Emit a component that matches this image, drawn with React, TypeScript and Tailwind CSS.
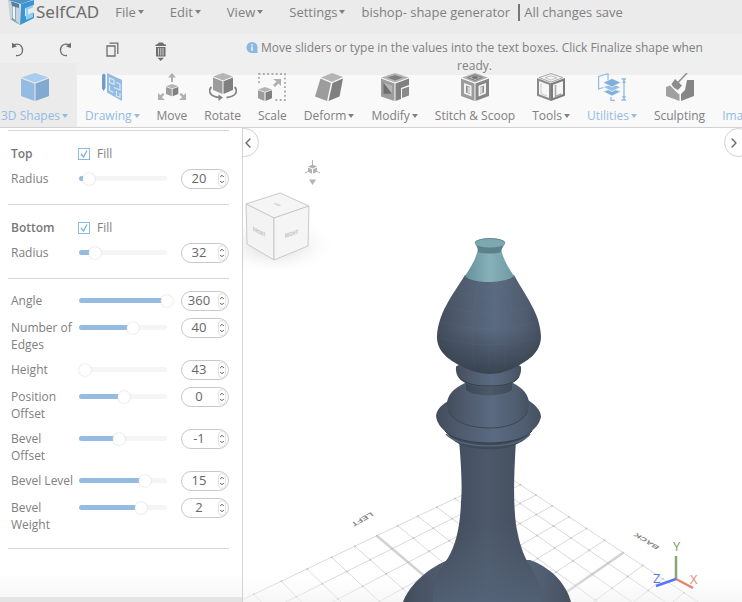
import { useState } from "react";
import type { ReactNode } from "react";
import { ChevronDown, ChevronLeft, ChevronRight, ChevronUp } from "lucide-react";

const Caret = () => (
	<svg viewBox="0 0 6 4" className="w-[6px] h-1 shrink-0" fill="currentColor" aria-hidden="true">
		<path d="M0 0h6L3 4z" />
	</svg>
);

/* ----- Icons ----- */
const Icon = ({ children }: { children: ReactNode }) => (
	<svg viewBox="0 0 28 28" className="w-7 h-7" aria-hidden="true">
		{children}
	</svg>
);

const SmallCube = ({ at }: { at: string }) => (
	<g transform={at}>
		<path d="M7 0l7 2.500L7 5 0 2.500z" fill="#b5b5b5" />
		<path d="M0 3.300l6.500 2.300V14L0 11.300z" fill="#9c9c9c" />
		<path d="M14 3.300L7.500 5.600V14L14 11.300z" fill="#808080" />
	</g>
);

const ShapesIcon = () => (
	<Icon>
		<path d="M14 0l13.500 4.500L14 9.500.5 4.500z" fill="#a9cdee" />
		<path d="M0 5.500l13.500 5V28L0 23z" fill="#94bce2" />
		<path d="M28 5.500l-13.500 5V28L28 23z" fill="#82a9cf" />
	</Icon>
);

const DrawingIcon = () => (
	<Icon>
		<path d="M4 2l2-1.500 1.500 1.500v13L5.700 18 4 15.500z" fill="#6f9dc8" />
		<path d="M9 0l15 7v21L9 19.500z" fill="#94bce2" />
		<path d="M11.500 5l4.500 2v4.500l-4.500-2zM11.500 12.500v5l4 2M18.500 9.500l3.500 1.500v6l-6-2.500M18.500 18v5l3.500 1.500V20" fill="none" stroke="#dcebf8" strokeWidth="1.100" />
	</Icon>
);

const MoveIcon = () => (
	<Icon>
		<path d="M14 0l4 4.500h-3V9h-2V4.500h-3zM0 27V20l2.300 2.300L5 20l1.500 1.500-2.700 2.700L7 27zM28 27V20l-2.300 2.300L23 20l-1.500 1.500 2.700 2.700L21 27z" fill="#b0b0b0" />
		<SmallCube at="translate(8 11) scale(.88)" />
	</Icon>
);

const RotateIcon = () => (
	<Icon>
		<path d="M14 0l10 3.500L14 7.500 4 3.500z" fill="#b5b5b5" />
		<path d="M4 4.500l9.500 3.700V21L4 17z" fill="#9c9c9c" />
		<path d="M24 4.500l-9.500 3.700V21l9.500-4z" fill="#808080" />
		<path d="M2.500 14C-1.500 18 1 24 11 24.500M25.500 14c4 4 1.500 9.500-8 10.500" fill="none" stroke="#858585" strokeWidth="1.800" />
		<path d="M9.500 21.500l4.500 3-4.500 3.500z" fill="#858585" />
	</Icon>
);

const ScaleIcon = () => (
	<Icon>
		<path d="M1 10V1h26v26H16" fill="none" stroke="#a8a8a8" strokeWidth="1.800" strokeDasharray="1.800 2.500" />
		<path d="M15 6h8v7l-2.500-2.500L17 14l-2-2 3.500-3.500z" fill="#b0b0b0" />
		<SmallCube at="translate(0 14)" />
	</Icon>
);

const DeformIcon = () => (
	<Icon>
		<path d="M6 4.500L17 0l11 4-11 5z" fill="#b5b5b5" />
		<path d="M5.500 5.500L16 10l-4 18L0 23.500z" fill="#9c9c9c" />
		<path d="M17.500 10L28 5.500l-3.500 18L13.500 28z" fill="#808080" />
	</Icon>
);

const ModifyIcon = () => (
	<Icon>
		<path d="M14 0l14 4.500L14 9.500 0 4.500z" fill="#b5b5b5" />
		<path d="M14 2l8 2.500L14 7.500l-8-3z" fill="#808080" />
		<path d="M0 5.500l13.500 5V28L0 23.500z" fill="#9c9c9c" />
		<path d="M2.500 9.500L11 20.500 2.500 21z" fill="#6f6f6f" />
		<path d="M2.500 9.500l8.500 3v8z" fill="#b5b5b5" />
		<path d="M14.500 10.500l13.500-5V12l-8 3v11l-5.500 2z" fill="#808080" />
		<path d="M21 16l7-2.500v9L21 25z" fill="#8b8b8b" />
	</Icon>
);

const StitchIcon = () => (
	<Icon>
		<path d="M14 0l13 4.500L14 9.500 1 4.500z" fill="#b0b0b0" />
		<path d="M14 1.800l7.500 2.700L14 7.500 6.500 4.500z" fill="none" stroke="#808080" strokeWidth="1" />
		<ellipse cx="14" cy="4.500" rx="3" ry="1.200" fill="#6f6f6f" />
		<path d="M0 5.500l13.500 5V28L0 23z" fill="#9c9c9c" />
		<path d="M28 5.500l-13.500 5V28L28 23z" fill="#868686" />
		<path d="M3 10l7.500 2.800v10.700L3 20.500zM25 10l-7.500 2.800v10.700l7.500-3z" fill="#f2f2f2" />
		<path d="M5 12.500l4 1.500v7l-4-1.500zM23 12.500L19 14v7l4-1.500z" fill="#8c8c8c" />
		<path d="M6.500 13.500L9 14.500v6l-2.500-1zM21.500 13.500L19 14.500v6l2.500-1z" fill="#d5d5d5" />
	</Icon>
);

const ToolsIcon = () => (
	<Icon>
		<path d="M14 .6l12 4-12 4.500-12-4.500z" fill="#f4f4f4" stroke="#a8a8a8" strokeWidth="1" />
		<path d="M14 2.800l6 2-6 2.200-6-2.200z" fill="none" stroke="#b8b8b8" strokeWidth=".8" />
		<path d="M1 6.500L13 11v15.500L1 22z" fill="#f6f6f6" stroke="#8b8b8b" strokeWidth="2" />
		<path d="M4 10.500v10l6 2.500" fill="none" stroke="#c9c9c9" strokeWidth="1" />
		<path d="M27 6.500L15 11v15.500L27 22z" fill="#f6f6f6" stroke="#7b7b7b" strokeWidth="2" />
		<path d="M18.500 12v11.500l6-2.500" fill="none" stroke="#a5a5a5" strokeWidth="1.500" />
	</Icon>
);

const UtilitiesIcon = () => (
	<Icon>
		<path d="M.6 3.500L10 .7V13L.6 16z" fill="none" stroke="#8fbbe3" strokeWidth="1.200" />
		<path d="M5 18.500l9-3 9 3-9 4.500z" fill="#7fb0dd" stroke="#f9f9f9" strokeWidth=".7" />
		<path d="M5 14l9-3 9 3-9 4.500z" fill="#94c0e8" stroke="#f9f9f9" strokeWidth=".7" />
		<path d="M5 9.500l9-4 9 4-9 4.500z" fill="#7fb0dd" stroke="#f9f9f9" strokeWidth=".7" />
		<path d="M26 6v21M23.500 6H28M23.500 27H28M13 24v3.500h4" fill="none" stroke="#8fbbe3" strokeWidth="1.300" />
		<path d="M24 10l2-3.500 2 3.500zM24 23l2 3.500 2-3.500z" fill="#8fbbe3" />
	</Icon>
);

const SculptingIcon = () => (
	<Icon>
		<path d="M0 14l4-1.500 8 8 1.500 1V28L0 23z" fill="#a0a0a0" />
		<path d="M15 21l4-4 2-10h7v16l-13 5z" fill="#868686" />
		<path d="M21 0L12 9.500" stroke="#8c8c8c" strokeWidth="1.500" />
		<path d="M9 6l7 6.500-4 4.500c-3-1-5.500-3-6.500-6z" fill="#8c8c8c" />
	</Icon>
);

const ImageIcon = () => (
	<Icon>
		<path d="M0 0h28v27H0z" fill="#a9cdee" />
		<path d="M0 0h2v27H0z" fill="#82aed8" />
	</Icon>
);

const Logo = () => (
	<svg viewBox="0 0 28 27" className="w-7 h-[27px] shrink-0" aria-hidden="true">
		<path d="M0 1l12 4v21L2 20z" fill="#c5d3dc" />
		<path d="M0 1l12-2 15 1-14 5z" fill="#4e93c4" />
		<path d="M3 2.500l8 2.500v4L7.500 8v14L4 20V7z" fill="#5c7f99" />
		<path d="M4.500 7L7 8v13l-2.500-2z" fill="#eef3f6" />
		<path d="M13 5l13-4v5l-9 3.500v8l9-3.500v5L12 26z" fill="#3d94d2" />
		<path d="M18 9l7-3v2.500l-5 2v5l5-2.500V18l-7 3z" fill="#8fd0f2" />
		<path d="M2 20l5 1 5 5z" fill="#7fa4ba" />
	</svg>
);

/* ----- Data ----- */
const menus = ["File", "Edit", "View", "Settings"];

const tools = [
	{ name: "3D Shapes", icon: <ShapesIcon />, menu: true, blue: true, active: true },
	{ name: "Drawing", icon: <DrawingIcon />, menu: true, blue: true },
	{ name: "Move", icon: <MoveIcon /> },
	{ name: "Rotate", icon: <RotateIcon /> },
	{ name: "Scale", icon: <ScaleIcon /> },
	{ name: "Deform", icon: <DeformIcon />, menu: true },
	{ name: "Modify", icon: <ModifyIcon />, menu: true },
	{ name: "Stitch & Scoop", icon: <StitchIcon /> },
	{ name: "Tools", icon: <ToolsIcon />, menu: true },
	{ name: "Utilities", icon: <UtilitiesIcon />, menu: true, blue: true },
	{ name: "Sculpting", icon: <SculptingIcon /> },
	{ name: "Image to 3D", icon: <ImageIcon />, blue: true },
];

const shape = [
	{ id: "angle", label: "Angle", value: 360, percent: 100 },
	{ id: "edges", label: "Number of Edges", value: 40, percent: 59 },
	{ id: "height", label: "Height", value: 43, percent: 0 },
	{ id: "position-offset", label: "Position Offset", value: 0, percent: 48 },
	{ id: "bevel-offset", label: "Bevel Offset", value: -1, percent: 42 },
	{ id: "bevel-level", label: "Bevel Level", value: 15, percent: 73 },
	{ id: "bevel-weight", label: "Bevel Weight", value: 2, percent: 68 },
];

/* ----- Side panel ----- */
interface SliderRowProps {
	id: string;
	label: string;
	value: number;
	percent: number;
}

const SliderRow = ({ id, label, value, percent }: SliderRowProps) => {
	const [position, setPosition] = useState(percent);
	const [text, setText] = useState(String(value));
	const step = (by: number) => setText(String(Number(text) + by));

	return (
		<div className="grid grid-cols-[68px_1fr_48px] items-start">
			<label htmlFor={id} className="pt-px pr-1 leading-[17px]">
				{label}
			</label>
			<div className="relative h-5 mr-2">
				<div className="absolute left-0 right-[6px] top-[7px] h-[5px] rounded-full bg-[#f5f5f5] overflow-hidden">
					<div className="h-full bg-[#95bce0]" style={{ width: `${position}%` }} />
				</div>
				<input
					type="range"
					aria-label={`${label} slider`}
					value={position}
					onChange={(e) => setPosition(Number(e.target.value))}
					className="absolute left-0 top-0 w-full h-5 appearance-none bg-transparent [&::-webkit-slider-thumb]:appearance-none [&::-webkit-slider-thumb]:size-3 [&::-webkit-slider-thumb]:rounded-full [&::-webkit-slider-thumb]:bg-white [&::-webkit-slider-thumb]:shadow-[0_0_2px_#ccc]"
				/>
			</div>
			<div className="flex items-center h-5 pr-[2px] rounded-full border border-[#c9c9c9] bg-white">
				<input
					id={id}
					inputMode="numeric"
					value={text}
					onChange={(e) => setText(e.target.value)}
					className="w-9 min-w-0 pr-[2px] text-center text-[13px] text-[#666] outline-none"
				/>
				<div className="flex flex-col shrink-0 w-2 h-4 justify-center rounded-full border border-[#e2e2e2] text-[#555]">
					<button aria-label={`Increase ${label}`} onClick={() => step(1)}>
						<ChevronUp size={6} strokeWidth={4} />
					</button>
					<button aria-label={`Decrease ${label}`} onClick={() => step(-1)}>
						<ChevronDown size={6} strokeWidth={4} />
					</button>
				</div>
			</div>
		</div>
	);
};

const CapSection = ({ name, value, percent }: { name: string; value: number; percent: number }) => {
	const id = name.toLowerCase();
	return (
		<section className="flex flex-col gap-[7px] border-t border-[#d6d6d6] pl-[3px] pt-[14px] pb-[15px]">
			<div className="flex items-center h-[17px]">
				<h2 className="w-[67px] font-semibold text-[#777]">{name}</h2>
				<label className="flex items-center gap-[7px]">
					<span className="grid">
						<input
							type="checkbox"
							defaultChecked
							className="peer col-start-1 row-start-1 appearance-none size-3 border border-[#8cb9e2] bg-white"
						/>
						<svg
							viewBox="0 0 12 12"
							className="invisible peer-checked:visible pointer-events-none col-start-1 row-start-1 size-3"
							fill="none"
							stroke="#7fb0dd"
							strokeWidth="1.300"
						>
							<path d="M3 6l2.500 3L9 2.500" />
						</svg>
					</span>
					Fill
				</label>
			</div>
			<SliderRow id={`${id}-radius`} label="Radius" value={value} percent={percent} />
		</section>
	);
};

/* ----- 3D view ----- */
// floor coordinates, counted from the far corner, to view coordinates
const project = (u: number, v: number) => {
	const w = 1 - 0.0212 * u - 0.0165 * v;
	return `${(505 - 26.3 * u + 6.61 * v) / w} ${(474.7 - 2.64 * u + 2.02 * v) / w}`;
};

const lines = Array.from({ length: 15 }, (_, i) => i);

const Scene = () => (
	<svg
		viewBox="243 128 499 474"
		preserveAspectRatio="xMidYMid slice"
		className="absolute inset-0 w-full h-full"
		role="img"
		aria-label="Bishop model"
	>
		<defs>
			<linearGradient id="body">
				<stop offset="0" stopColor="#424c5b" />
				<stop offset=".2" stopColor="#4e5a6c" />
				<stop offset=".55" stopColor="#5a6a80" />
				<stop offset=".85" stopColor="#505d70" />
				<stop offset="1" stopColor="#455060" />
			</linearGradient>
			<linearGradient id="shaft">
				<stop offset="0" stopColor="#3d4654" />
				<stop offset=".5" stopColor="#4c596a" />
				<stop offset="1" stopColor="#414b59" />
			</linearGradient>
			<linearGradient id="shade" x2="0" y2="1">
				<stop offset=".55" stopColor="#303945" stopOpacity="0" />
				<stop offset="1" stopColor="#2f3741" stopOpacity=".75" />
			</linearGradient>
			<linearGradient id="foot" x2="0" y2="1">
				<stop offset=".5" stopColor="#56657a" stopOpacity="0" />
				<stop offset="1" stopColor="#56657a" stopOpacity=".8" />
			</linearGradient>
			<linearGradient id="cap">
				<stop offset="0" stopColor="#66909a" />
				<stop offset=".5" stopColor="#86b1ba" />
				<stop offset="1" stopColor="#6f9aa3" />
			</linearGradient>
			<linearGradient id="floor" x2="0" y2="1">
				<stop offset="0" stopColor="#f5f5f5" stopOpacity="0" />
				<stop offset="1" stopColor="#f0f0f0" stopOpacity=".6" />
			</linearGradient>
			<radialGradient id="shadow">
				<stop offset="0" stopColor="#bbb" stopOpacity=".7" />
				<stop offset="1" stopColor="#fff" stopOpacity="0" />
			</radialGradient>
		</defs>

		{/* grid */}
		<g fill="none">
			{lines.map((i) => (
				<g key={i} strokeWidth={i === 7 ? 2.5 : 1} stroke={i === 7 ? "#d2d2d2" : "#dadada"}>
					<path d={`M${project(i, 0)}L${project(i, 14)}`} />
					<path d={`M${project(0, i)}L${project(14, i)}`} />
				</g>
			))}
			<path
				d={lines.flatMap((u) => lines.map((v) => `M${project(u, v)}h.01`)).join("")}
				stroke="#c6c6c6"
				strokeWidth="2"
				strokeLinecap="round"
			/>
		</g>
		<rect x="243" y="575" width="499" height="27" fill="url(#floor)" />
		<g fontFamily="Liberation Sans" fontWeight="bold" fontSize="9" fill="#858585">
			<text transform="matrix(-.9 .5 -.5 -.55 371 512)">LEFT</text>
			<text transform="matrix(-.9 -.55 .6 -.4 660 547)">BACK</text>
		</g>

		{/* base and shaft */}
		<path d="M403 602C408 588 424 570 448 560H530C552 568 566 584 571 602z" fill="url(#body)" />
		<path d="M459 440C462 475 462 490 461 502C460 530 455 546 448 558C438 572 432 584 433 602H541C542 590 538 580 528 563C520 548 518 535 516 525C513 500 514 475 516 440z" fill="url(#shaft)" />
		<path d="M459 440C462 475 462 490 461 502C460 530 455 546 448 558C438 572 432 584 433 602H541C542 590 538 580 528 563C520 548 518 535 516 525C513 500 514 475 516 440z" fill="url(#foot)" />

		{/* collar */}
		<path d="M445 430C450 438 454 441 459 444C475 451 503 451 517 444C524 441 528 438 532 430z" fill="#3f4a59" />
		<path d="M436 416C437 408 443 404 450 400H528C536 405 541 411 541 417C539 425 535 428 531 432C520 447 458 447 446 432C441 428 437 423 436 416z" fill="url(#body)" />
		<path d="M445 431C458 447 520 447 532 431" fill="none" stroke="#333c48" strokeWidth="1" />
		<path d="M446 434C460 450 518 450 530 434" fill="none" stroke="#56657a" strokeWidth="1.500" />
		<path d="M465 383C454 388 447 395 447 404C447 420 466 428 489 428S529 420 529 404C529 395 523 388 513 383z" fill="url(#body)" />
		<path d="M448 411C454 423 472 428 489 428S523 423 528 411" fill="none" stroke="#3c4653" strokeWidth="1" />
		<path d="M466 380V390C474 397 504 397 512 390V380z" fill="url(#shaft)" />
		<path d="M456 367C455 379 464 387 489 387S522 379 521 367C519 360 459 360 456 367z" fill="url(#body)" />
		<path d="M459 377C466 385 478 386 489 386S513 385 519 377" fill="none" stroke="#343d49" strokeWidth="1" />

		{/* head */}
		<path d="M465 275C452 296 438 313 437 337C437 352 450 360 459 365C468 370 480 374 490 374S512 370 521 364C530 359 541 351 541 336C540 313 526 297 514 275z" fill="url(#body)" />
		<path d="M465 275C452 296 438 313 437 337C437 352 450 360 459 365C468 370 480 374 490 374S512 370 521 364C530 359 541 351 541 336C540 313 526 297 514 275z" fill="url(#shade)" />
		<g fill="none" stroke="#6b7a8f" strokeOpacity=".12" strokeWidth="1">
			<path d="M455 292Q489 302 524 292M446 307Q489 319 533 307M440 322Q489 336 538 322M438 337Q489 353 540 337M478 282Q470 320 474 366M489 283V368M501 282Q509 320 505 366" />
		</g>
		<path d="M478 249C476 259 471 267 465 276C472 284 506 284 514 276C508 267 503 259 501 249z" fill="url(#cap)" />
		<path d="M475 243C476 246 478 247 478 252C484 254 496 254 501 252C502 247 504 246 505 243z" fill="#5c8189" />
		<ellipse cx="490" cy="243" rx="15" ry="4.500" fill="#7da8b1" />
		<path d="M475 243A15 4.500 0 0 1 505 243" fill="none" stroke="#5f868e" strokeWidth="1" />

		{/* view cube */}
		<ellipse cx="275" cy="245" rx="62" ry="30" fill="url(#shadow)" />
		<g stroke="#c9c9c9" strokeWidth="1" strokeLinejoin="round">
			<path d="M246 204L280 193L309 206L274 218z" fill="#f5f5f5" />
			<path d="M246 204L274 218V260L247 244z" fill="#f3f3f3" />
			<path d="M274 218L309 206L308 246L274 260z" fill="#f5f5f5" />
		</g>
		<g fontFamily="Liberation Sans" fontWeight="bold" fontSize="6" fill="#bcbcbc">
			<text transform="matrix(.6 .3 0 1 253 231)">FRONT</text>
			<text transform="matrix(.7 -.24 0 1 285 238)">RIGHT</text>
			<text fontSize="4" transform="matrix(.8 .3 -.6 .5 273 204)">TOP</text>
		</g>

		{/* home view */}
		<g fill="#b3b3b3">
			<path d="M312.500 160v6M305 173l4-2M320 173l-4-2" stroke="#b3b3b3" />
			<path d="M312.500 164.500l4.500 2-4.500 2-4.500-2zM308 167.500l4 1.800v4.500l-4-2zM317 167.500l-4 1.800v4.500l4-2z" />
			<path d="M309 179.500h7l-3.500 5.500z" />
		</g>

		{/* axes */}
		<g fontFamily="Open Sans" fontSize="13" strokeWidth="2.500">
			<path d="M676 579V556" stroke="#84a873" />
			<path d="M676 579L693 588" stroke="#e58573" />
			<path d="M676 579L656 586" stroke="#5b74f5" />
			<text x="673" y="551" fill="#76a164">Y</text>
			<text x="690" y="584" fill="#e98a78">X</text>
			<text x="653" y="583" fill="#5b74f5">Z</text>
		</g>
	</svg>
);

const App = () => {
	return (
		<div className="flex flex-col h-screen overflow-hidden bg-white font-['Open_Sans',sans-serif] text-xs text-[#808080]">
			{/* ----- Menu bar ----- */}
			<header className="flex items-center shrink-0 h-[34px] pl-2 pb-[9px] bg-[#ebebeb] text-[13px] whitespace-nowrap">
				<a href="#" className="flex items-center text-[17px] font-['Noto_Sans',sans-serif] text-[#6b6b6b]">
					<Logo />
					SelfCAD
				</a>
				<nav className="flex gap-[26px] ml-4">
					{menus.map((menu) => (
						<button key={menu} className="flex items-center gap-[2px]">
							{menu}
							<Caret />
						</button>
					))}
				</nav>
				<p className="ml-4">bishop- shape generator</p>
				<p className="ml-2 pl-1 border-l-2 border-[#777]">All changes save</p>
			</header>

			{/* ----- Actions and hint ----- */}
			<div className="flex shrink-0 h-[41px] bg-[#efefef]">
				<div className="flex gap-[30px] pl-[9px] pt-[7px] text-[#6e6e6e]">
					<button aria-label="Undo" className="size-[18px]">
						<svg viewBox="0 0 18 18" fill="none" stroke="currentColor" strokeWidth="1.300">
							<path d="M4 4c8-3 10 3 9.500 6-.5 3-3 5-6.500 4.500" />
							<path d="M3 1.500V7l5-1.500z" fill="currentColor" stroke="none" />
						</svg>
					</button>
					<button aria-label="Redo" className="size-[18px]">
						<svg viewBox="0 0 18 18" fill="none" stroke="currentColor" strokeWidth="1.300">
							<path d="M13 4C5 1 3 7 3.500 10c.5 3 3 5 6.500 4.500" />
							<path d="M14 1.500V7L9 5.500z" fill="currentColor" stroke="none" />
						</svg>
					</button>
					<button aria-label="Copy" className="size-[18px]">
						<svg viewBox="0 0 18 18" fill="none" stroke="currentColor" strokeWidth="1.300">
							<path d="M2 5h8v10H2z" />
							<path d="M4.500 2.200h8.300V13" />
						</svg>
					</button>
					<button aria-label="Delete" className="w-[18px] h-5">
						<svg viewBox="0 0 18 20" fill="currentColor">
							<path d="M4 3.500l2-2h3.500l2 2H13V5H2.500V3.500zM3 6h9.500v9.500H3z" />
							<path d="M5.500 7v7.500M7.800 7v7.500M10 7v7.500" stroke="#ddd" strokeWidth=".9" />
							<path d="M4.500 16.800h6.500L7.700 20z" />
						</svg>
					</button>
				</div>
				<p className="flex-1 ml-[70px] mr-[34px] pt-[5px] text-center leading-[18px]">
					<svg viewBox="0 0 12 12" className="inline w-3 h-[11px] mr-[3px] -mt-[2px]" aria-hidden="true">
						<path d="M6 0a6 6 0 0 1 6 6v6H6A6 6 0 0 1 6 0z" fill="#8ab8e2" />
						<path d="M6 2.500v1.500M6 5v4.500" stroke="#fff" strokeWidth="1.500" />
					</svg>
					Move sliders or type in the values into the text boxes. Click Finalize shape when ready.
				</p>
			</div>

			{/* ----- Tools ----- */}
			<div className="shrink-0 bg-[#f9f9f9] border-b border-[#d2d2d2]">
				<nav className="flex h-16 -mt-[12px] -ml-[7px] whitespace-nowrap">
					{tools.map((tool) => (
						<button
							key={tool.name}
							className={`relative flex flex-col items-center shrink-0 pl-2 pr-[9px] pt-[10px] ${tool.active ? "bg-[#ebebeb]" : ""} ${tool.blue ? "text-[#94bce2]" : ""}`}
						>
							{tool.icon}
							<span className="flex items-center gap-[2px] mt-[7px]">
								{tool.name}
								{tool.menu && <Caret />}
							</span>
						</button>
					))}
				</nav>
			</div>

			<div className="flex flex-1 min-h-0">
				{/* ----- Shape settings ----- */}
				<aside className="flex flex-col shrink-0 w-[243px] pt-[2px] border-r border-[#d2d2d2]">
					<div className="flex-1 min-h-0 pl-2 pr-[13px]">
						<CapSection name="Top" value={20} percent={5} />
						<CapSection name="Bottom" value={32} percent={12} />
						<section className="flex flex-col gap-[7px] border-y border-[#d6d6d6] pl-[3px] pt-3 pb-[15px]">
							{shape.map((row) => (
								<SliderRow key={row.id} {...row} />
							))}
						</section>
					</div>
					<div className="h-6 bg-gradient-to-b from-white to-[#f7f7f7]" />
					<div className="h-[5px] bg-[#e4e4e4]" />
				</aside>

				{/* ----- Viewport ----- */}
				<main className="relative flex-1 overflow-hidden">
					<Scene />
					<button
						aria-label="Hide panel"
						className="absolute -left-[13px] top-0 flex items-center justify-end size-[29px] pr-[2px] rounded-full border border-[#d2d2d2] bg-white text-[#666]"
					>
						<ChevronLeft size={16} strokeWidth={2} />
					</button>
					<button
						aria-label="Show panel"
						className="absolute -right-[11px] top-0 flex items-center justify-start size-[29px] pl-[1px] rounded-full border border-[#d2d2d2] bg-white text-[#666]"
					>
						<ChevronRight size={16} strokeWidth={2} />
					</button>
				</main>
			</div>
		</div>
	);
};

export default App;
